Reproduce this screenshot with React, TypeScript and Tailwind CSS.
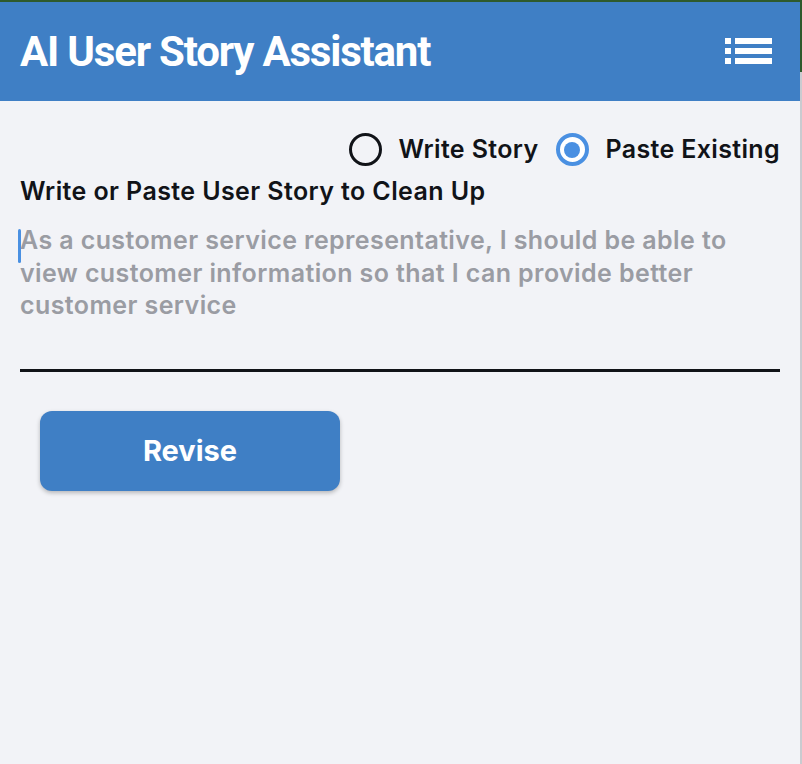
import React from "react";

const ListIcon = () => (
  <svg width="47" height="28" viewBox="0 0 47 28" fill="white" aria-hidden="true">
    <rect x="0" y="0" width="6" height="6" />
    <rect x="10" y="0" width="37" height="6" />
    <rect x="0" y="10" width="6" height="6" />
    <rect x="10" y="10" width="37" height="6" />
    <rect x="0" y="20" width="6" height="6" />
    <rect x="10" y="20" width="37" height="6" />
  </svg>
);

const Radio = ({ checked, label }: { checked: boolean; label: string }) => (
  <label className="flex items-center gap-[17px]">
    {checked ? (
      <span className="flex h-[33px] w-[33px] items-center justify-center rounded-full border-[4px] border-[#4a90e2] bg-white">
        <span className="h-[16px] w-[16px] rounded-full bg-[#4a90e2]" />
      </span>
    ) : (
      <span className="h-[33px] w-[33px] rounded-full border-[3px] border-[#111318]" />
    )}
    <span className="text-[25px] font-semibold tracking-[0.35px] text-[#111318]">{label}</span>
  </label>
);

export default function App() {
  return (
    <div
      className="flex h-[764px] w-[802px] flex-col bg-[#f2f3f7]"
      style={{ fontFamily: "Inter, 'Liberation Sans', sans-serif" }}
    >
      <div className="h-[2px] w-full bg-[#2e5a2c]" />
      <div className="flex flex-1">
        <div className="flex w-[800px] flex-col">
          {/* Header */}
          <header className="flex h-[99px] items-center justify-between bg-[#3f7fc5] pl-[20px] pr-[28px]">
            <h1 className="font-['Roboto'] text-[42px] font-bold tracking-[-1.2px] text-white">AI User Story Assistant</h1>
            <ListIcon />
          </header>

          <main className="flex flex-col px-[20px]">
            <div className="mt-[30px] flex items-center justify-end gap-[17px]">
              <Radio checked={false} label="Write Story" />
              <Radio checked={true} label="Paste Existing" />
            </div>

            <div className="mt-[4px] text-[25px] font-semibold tracking-[0.4px] text-[#111318]">
              Write or Paste User Story to Clean Up
            </div>

            <div className="relative mt-[12px] h-[150px] border-b-[3px] border-[#111318]">
              <span className="absolute left-[-2px] top-[7px] h-[34px] w-[3px] rounded-sm bg-[#4a90e2]" />
              <p className="pt-[2px] text-[25px] font-semibold leading-[32.5px] tracking-[0.4px] text-[#9a9ca3]">
                As a customer service representative, I should be able to view customer information so that I can provide better customer service
              </p>
            </div>

            <div className="mt-[39px] pl-[20px]">
              <button className="h-[80px] w-[300px] rounded-[12px] bg-[#3f7fc5] text-[29px] font-bold text-white shadow-[0_2px_4px_rgba(0,0,0,0.25)]">
                Revise
              </button>
            </div>
          </main>
        </div>
        <div className="flex w-[2px] flex-col">
          <div className="h-[70px] bg-[#2e5a2c]" />
          <div className="flex-1 bg-[#c9cbd0]" />
        </div>
      </div>
    </div>
  );
}
